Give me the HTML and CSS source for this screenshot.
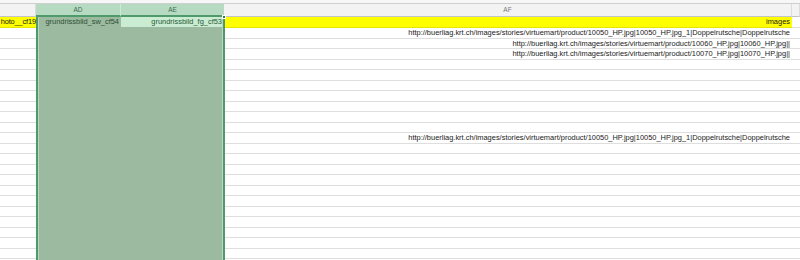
FILE: index.html
```html
<!DOCTYPE html>
<html lang="en">
<head>
  <meta charset="UTF-8">
  <title>Sheet</title>
  <link rel="stylesheet" href="styles.css">
</head>
<body>
  <div class="sheet">
    <div class="topline"></div>

    <div class="row head">
      <div class="cell"></div>
      <div class="cell sel">AD</div>
      <div class="cell sel split">AE</div>
      <div class="cell">AF</div>
      <div class="cell"></div>
    </div>

    <div class="row yellow">
      <div class="cell"><span class="clip">hoto__cf19</span></div>
      <div class="cell sel">grundrissbild_sw_cf54</div>
      <div class="cell active">grundrissbild_fg_cf53</div>
      <div class="cell">images</div>
      <div class="cell blank"></div>
    </div>

    <div class="row"><div class="cell"></div><div class="cell sel"></div><div class="cell sel"></div><div class="cell">http://buerliag.krt.ch/images/stories/virtuemart/product/10050_HP.jpg|10050_HP.jpg_1|Doppelrutsche|Doppelrutsche</div><div class="cell"></div></div>
    <div class="row"><div class="cell"></div><div class="cell sel"></div><div class="cell sel"></div><div class="cell">http://buerliag.krt.ch/images/stories/virtuemart/product/10060_HP.jpg|10060_HP.jpg||</div><div class="cell"></div></div>
    <div class="row"><div class="cell"></div><div class="cell sel"></div><div class="cell sel"></div><div class="cell">http://buerliag.krt.ch/images/stories/virtuemart/product/10070_HP.jpg|10070_HP.jpg||</div><div class="cell"></div></div>
    <div class="row"><div class="cell"></div><div class="cell sel"></div><div class="cell sel"></div><div class="cell"></div><div class="cell"></div></div>
    <div class="row"><div class="cell"></div><div class="cell sel"></div><div class="cell sel"></div><div class="cell"></div><div class="cell"></div></div>
    <div class="row"><div class="cell"></div><div class="cell sel"></div><div class="cell sel"></div><div class="cell"></div><div class="cell"></div></div>
    <div class="row"><div class="cell"></div><div class="cell sel"></div><div class="cell sel"></div><div class="cell"></div><div class="cell"></div></div>
    <div class="row"><div class="cell"></div><div class="cell sel"></div><div class="cell sel"></div><div class="cell"></div><div class="cell"></div></div>
    <div class="row"><div class="cell"></div><div class="cell sel"></div><div class="cell sel"></div><div class="cell"></div><div class="cell"></div></div>
    <div class="row"><div class="cell"></div><div class="cell sel"></div><div class="cell sel"></div><div class="cell"></div><div class="cell"></div></div>
    <div class="row"><div class="cell"></div><div class="cell sel"></div><div class="cell sel"></div><div class="cell">http://buerliag.krt.ch/images/stories/virtuemart/product/10050_HP.jpg|10050_HP.jpg_1|Doppelrutsche|Doppelrutsche</div><div class="cell"></div></div>
    <div class="row"><div class="cell"></div><div class="cell sel"></div><div class="cell sel"></div><div class="cell"></div><div class="cell"></div></div>
    <div class="row"><div class="cell"></div><div class="cell sel"></div><div class="cell sel"></div><div class="cell"></div><div class="cell"></div></div>
    <div class="row"><div class="cell"></div><div class="cell sel"></div><div class="cell sel"></div><div class="cell"></div><div class="cell"></div></div>
    <div class="row"><div class="cell"></div><div class="cell sel"></div><div class="cell sel"></div><div class="cell"></div><div class="cell"></div></div>
    <div class="row"><div class="cell"></div><div class="cell sel"></div><div class="cell sel"></div><div class="cell"></div><div class="cell"></div></div>
    <div class="row"><div class="cell"></div><div class="cell sel"></div><div class="cell sel"></div><div class="cell"></div><div class="cell"></div></div>
    <div class="row"><div class="cell"></div><div class="cell sel"></div><div class="cell sel"></div><div class="cell"></div><div class="cell"></div></div>
    <div class="row"><div class="cell"></div><div class="cell sel"></div><div class="cell sel"></div><div class="cell"></div><div class="cell"></div></div>
    <div class="row"><div class="cell"></div><div class="cell sel"></div><div class="cell sel"></div><div class="cell"></div><div class="cell"></div></div>
    <div class="row"><div class="cell"></div><div class="cell sel"></div><div class="cell sel"></div><div class="cell"></div><div class="cell"></div></div>
    <div class="row"><div class="cell"></div><div class="cell sel"></div><div class="cell sel"></div><div class="cell"></div><div class="cell"></div></div>
    <div class="row"><div class="cell"></div><div class="cell sel"></div><div class="cell sel"></div><div class="cell"></div><div class="cell"></div></div>

    <div class="selection"></div>
    <div class="handle"></div>
  </div>
</body>
</html>
```

FILE: styles.css
```css
* {
  box-sizing: border-box;
}

html, body {
  margin: 0;
  background: #ffffff;
  overflow: hidden;
}

.sheet {
  position: relative;
  width: 800px;
  height: 260px;
  overflow: hidden;
  font-family: 'Liberation Sans', Arial, sans-serif;
  font-size: 7.45px;
  color: #222;
}

.topline {
  height: 4px;
  background: #f7f7f7;
  border-bottom: 1px solid #cfcfcf;
}

.row {
  display: grid;
  grid-template-columns: 36px 85px 103px 568px 1fr;
  height: 10.5px;
}

.cell {
  display: flex;
  justify-content: flex-end;
  padding: 0 2px;
  line-height: 9.5px;
  white-space: nowrap;
  overflow: hidden;
  border-bottom: 1px solid #dedede;
}

.cell.sel {
  background: #9bba9f;
  border-bottom-color: #9bba9f;
}

/* column header */
.row.head {
  height: 13px;
  background: #f3f3f3;
}

.head .cell {
  justify-content: center;
  line-height: 12px;
  color: #777;
  font-size: 6.5px;
  border-right: 1px solid #dcdcdc;
  border-bottom-color: #c4c4c4;
}

.head .cell.sel {
  background: #b7dbc2;
  color: #3b6e4c;
  border-right: 1px solid #cfe8d6;
  border-bottom: 2px solid #4e9a6b;
}

.head .cell.split {
  border-right: none;
}

/* yellow title row */
.row.yellow {
  background: #ffff00;
  height: 11px;
}

.yellow .cell {
  line-height: 10px;
  color: #1a1a1a;
  border-bottom-color: #e6e600;
}

.yellow .cell:first-child {
  padding: 0;
}

.clip {
  letter-spacing: -0.15px;
}

.yellow .blank {
  background: #ffffff;
  border-bottom-color: #dedede;
}

.yellow .cell.sel {
  color: #2f4f36;
  border-bottom-color: #9bba9f;
}

.yellow .cell.active {
  background: #c9ecd2;
  color: #2a5b38;
  border-bottom-color: #9bba9f;
}

.selection {
  position: absolute;
  left: 36px;
  top: 17px;
  width: 189px;
  bottom: 0;
  border: 2px solid #4e9a6b;
  border-top: none;
  border-bottom: none;
  box-shadow: inset 1px 0 0 #b8d5bd, inset -1px 0 0 #b8d5bd;
  pointer-events: none;
}

.handle {
  position: absolute;
  left: 222px;
  top: 15px;
  width: 4px;
  height: 4px;
  background: #2f7a4b;
  border: 1px solid #ffffff;
}
```
